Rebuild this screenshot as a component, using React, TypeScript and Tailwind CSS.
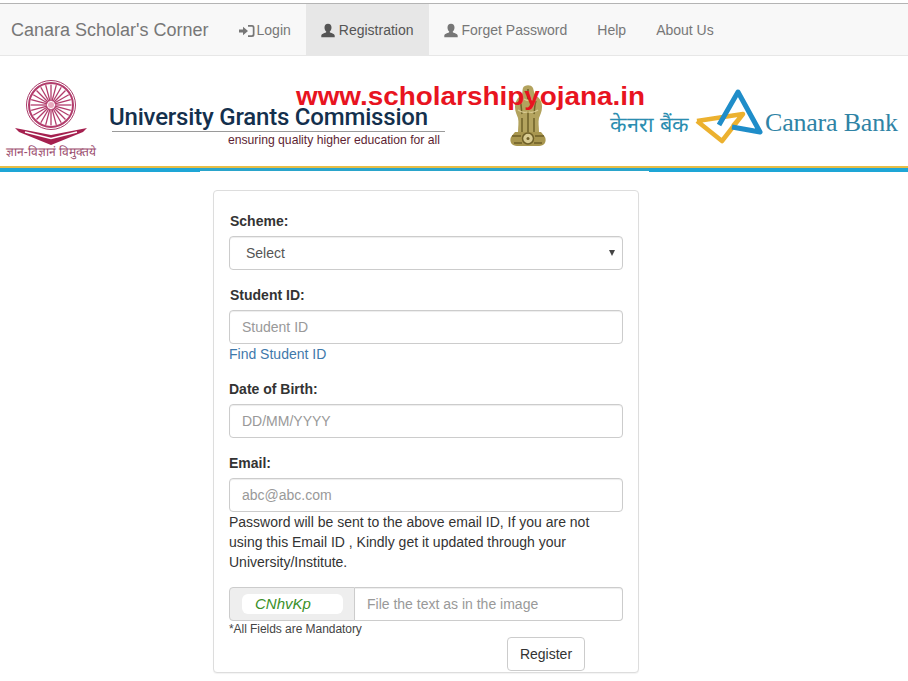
function UserIcon() {
  return (
    <svg width="14" height="15" viewBox="0 0 14 14" className="mr-[4px] fill-current">
      <path d="M7 0.200c2.300 0 3.500 1.600 3.500 3.800 0 1.600-.7 3.100-1.500 3.800-.3.300-.3 1 .1 1.200 1.500.8 4.600 1.300 4.600 3.300V13.800H.3v-1.500c0-2 3.100-2.500 4.600-3.300.4-.2.4-.9.1-1.200C4.200 7.100 3.500 5.600 3.500 4 3.500 1.800 4.700.2 7 .2z" />
    </svg>
  )
}

function LoginIcon() {
  return (
    <svg width="16" height="14" viewBox="0 0 16 14" className="mr-[2px] fill-current">
      <path d="M0 5.500h4V2.800L9 7l-5 4.200V8.500H0z" />
      <path d="M9 1h4a2.500 2.500 0 0 1 2.500 2.500v7A2.500 2.500 0 0 1 13 13H9v-1.700h3.600c.8 0 1.200-.4 1.200-1.200V3.900c0-.8-.4-1.200-1.200-1.200H9z" />
    </svg>
  )
}

function NavItem({ label, icon, active }: { label: string; icon?: React.ReactNode; active?: boolean }) {
  return (
    <a className={active ? "flex items-center px-[15px] pt-[2px] h-[51px] bg-[#e7e7e7] text-[#555] text-[14px]" : "flex items-center px-[15px] pt-[2px] h-[51px] text-[#777] text-[14px]"}>
      {icon}
      {label}
    </a>
  )
}

function UgcLogo() {
  const spokes = Array.from({ length: 24 }, (_, i) => (i * 15 * Math.PI) / 180)
  return (
    <div className="flex flex-col items-center w-[90px]">
      <svg width="74" height="66" viewBox="0 0 74 66">
        <circle cx="37" cy="25" r="24.500" fill="none" stroke="#a83a68" strokeWidth="1" />
        <circle cx="37" cy="25" r="22" fill="none" stroke="#b23c6c" strokeWidth="2" />
        {spokes.map((a, i) => (
          <line key={i} x1={37 + 4 * Math.cos(a)} y1={25 + 4 * Math.sin(a)} x2={37 + 20.500 * Math.cos(a)} y2={25 + 20.500 * Math.sin(a)} stroke="#b23c6c" strokeWidth="1.300" />
        ))}
        <circle cx="37" cy="25" r="3" fill="#e9a9bf" />
        <path d="M1 48 L37 55 L73 48 L69 52 L37 65 L5 52 Z" fill="#a5204f" />
        <path d="M11 52 L37 58.500 L63 52" fill="none" stroke="#fff" strokeWidth="1.500" />
      </svg>
      <span className="text-[12px] leading-[12px] text-[#9a4a6c] whitespace-nowrap">ज्ञान-विज्ञानं विमुक्तये</span>
    </div>
  )
}

function Emblem() {
  return (
    <svg width="40" height="64" viewBox="0 0 40 64">
      {/* lions, then the abacus under them */}
      <path d="M15 5c1-3 8-4 10 0 1 3 1 6 3 8 4 2 6 6 6 11 0 5-2 8-3 11-1 4 0 9 0 14H10c0-5 1-10 0-14-1-3-3-6-3-11 0-5 2-9 6-11 2-2 1-5 2-8z" fill="#b3a35e" />
      <path d="M12 18c2 4 1 9 2 13M28 18c-2 4-1 9-2 13M20 6v10M14 35v14M20 30v19M26 35v14" stroke="#6f6229" strokeWidth="1.500" fill="none" />
      <path d="M16 16c3 2 6 2 8 0M10 27c3 2 6 3 9 2M30 27c-3 2-6 3-9 2" stroke="#d9cd94" strokeWidth="1.300" fill="none" />
      <path d="M7 49h26l4 5c2 5-1 9-6 9H9c-5 0-8-4-6-9z" fill="#a8964f" />
      <circle cx="20" cy="55.500" r="5.500" fill="#d8cb92" stroke="#6e5f28" strokeWidth="1.500" />
      <circle cx="20" cy="55.500" r="1.500" fill="#6e5f28" />
      <path d="M4 53h9M27 53h9M6 60h8M26 60h8" stroke="#6e5f28" strokeWidth="1.300" />
    </svg>
  )
}

function CanaraLogo() {
  return (
    <svg width="70" height="58" viewBox="0 0 70 58">
      <path d="M3 33 L49 26 L39 38 M49 26 L28 53 L3 33" fill="none" stroke="#ecb12f" strokeWidth="4.500" strokeLinejoin="round" />
      <path d="M25 37 L44 4 L66 44 L38 39" fill="none" stroke="#1f8dc9" strokeWidth="5" strokeLinejoin="round" />
    </svg>
  )
}

function Banner() {
  return (
    <div className="relative flex h-[110px] bg-white">
      <div className="ml-[6px] mt-[24px]">
        <UgcLogo />
      </div>
      <div className="ml-[13px] mt-[47px] w-[336px]">
        <div className="text-[24px] leading-[28px] font-medium text-[#14304d] tracking-[-0.2px] whitespace-nowrap font-['Roboto',sans-serif]">University Grants Commission</div>
        <div className="ml-[3px] h-px bg-[#9a9a9a]"></div>
        <div className="pr-[5px] text-right text-[12.200px] leading-[16px] text-[#5e1f33]">ensuring quality higher education for all</div>
      </div>
      <div className="ml-[63px] mt-[27px]">
        <Emblem />
      </div>
      <div className="ml-[62px] mt-[54px] w-[80px] text-[21.500px] leading-[30px] text-[#2b8db0] whitespace-nowrap">केनरा बैंक</div>
      <div className="ml-[4px] mt-[32px]">
        <CanaraLogo />
      </div>
      <div className="ml-[1px] mt-[49px] text-[26px] leading-[36px] tracking-[-0.2px] text-[#2f83a5] whitespace-nowrap font-['Liberation_Serif',serif]">Canara Bank</div>
      <div className="absolute left-[296px] top-[26px] text-[25px] leading-[28px] font-bold text-[#e8141f] whitespace-nowrap scale-x-[1.115] origin-left">www.scholarshipyojana.in</div>
    </div>
  )
}

function Field({ label, placeholder, nudge }: { label: string; placeholder: string; nudge?: boolean }) {
  return (
    <>
      <label className={nudge ? "block ml-px mb-[5px] text-[14px] leading-[20px] font-bold text-[#333]" : "block mb-[5px] text-[14px] leading-[20px] font-bold text-[#333]"}>{label}</label>
      <input placeholder={placeholder} className="block w-full h-[34px] px-[12px] text-[14px] text-[#555] bg-white border border-[#ccc] rounded-[4px] shadow-[inset_0_1px_1px_rgba(0,0,0,0.075)] placeholder:text-[#999] outline-none" />
    </>
  )
}

function RegisterForm() {
  return (
    <div className="w-[426px] ml-[213px] mt-[18px] h-[483px] px-[15px] pt-[20px] bg-white border border-[#ddd] rounded-[4px] shadow-[0_1px_1px_rgba(0,0,0,0.05)]">
      <label className="block ml-px mb-[5px] text-[14px] leading-[20px] font-bold text-[#333]">Scheme:</label>
      <div className="relative">
        <select className="block w-full h-[34px] pl-[16px] text-[14px] text-[#555] bg-white border border-[#ccc] rounded-[4px] shadow-[inset_0_1px_1px_rgba(0,0,0,0.075)] appearance-none outline-none">
          <option>Select</option>
        </select>
        <span className="absolute right-[8px] top-[14px] w-0 h-0 border-x-[3px] border-x-transparent border-t-[6px] border-t-[#444]"></span>
      </div>

      <div className="mt-[15px]">
        <Field label="Student ID:" placeholder="Student ID" nudge />
      </div>
      <a className="block text-[14px] leading-[20px] text-[#3f79ab]">Find Student ID</a>

      <div className="mt-[15px]">
        <Field label="Date of Birth:" placeholder="DD/MM/YYYY" />
      </div>

      <div className="mt-[15px]">
        <Field label="Email:" placeholder="abc@abc.com" />
      </div>
      <p className="text-[14px] leading-[20px] text-[#333]">
        Password will be sent to the above email ID, If you are not using this Email ID , Kindly get it updated through your University/Institute.
      </p>

      <div className="flex mt-[15px] h-[34px]">
        <div className="flex items-center w-[126px] pl-[12px] bg-[#eee] border border-[#ccc] rounded-l-[4px]">
          <div className="w-[101px] h-[20px] pl-[13px] bg-white rounded-[6px] text-[15px] leading-[20px] italic text-[#3a9028]">CNhvKp</div>
        </div>
        <input placeholder="File the text as in the image" className="flex-1 min-w-0 px-[12px] text-[14px] text-[#555] bg-white border border-l-0 border-[#ccc] rounded-r-[4px] shadow-[inset_0_1px_1px_rgba(0,0,0,0.075)] placeholder:text-[#999] outline-none" />
      </div>
      <div className="text-[12px] leading-[16px] text-[#444] tracking-[-0.05px]">*All Fields are Mandatory</div>
      <div className="flex justify-end pr-[38px]">
        <button className="w-[78px] h-[34px] text-[14px] text-[#333] bg-white border border-[#ccc] rounded-[4px]">Register</button>
      </div>
    </div>
  )
}

export default function App() {
  return (
    <div className="min-h-[681px] bg-white pt-[3px] font-['Liberation_Sans',Arial,sans-serif]">
      <nav className="flex h-[53px] bg-[#f8f8f8] border-t border-t-[#b4b4b4] border-b border-b-[#e7e7e7]">
        <div className="flex items-center pl-[11px] pr-[15px] pt-[1px] text-[18px] text-[#777] whitespace-nowrap">Canara Scholar's Corner</div>
        <NavItem label="Login" icon={<LoginIcon />} />
        <NavItem label="Registration" icon={<UserIcon />} active />
        <NavItem label="Forget Password" icon={<UserIcon />} />
        <NavItem label="Help" />
        <NavItem label="About Us" />
      </nav>
      <Banner />
      <div className="h-[2px] bg-[#e6bd45]"></div>
      <div className="flex items-start">
        <div className="w-[200px] h-[4px] bg-[#1ea6d6]"></div>
        <div className="w-[449px] h-[3px] bg-[#2aa5cb]"></div>
        <div className="flex-1 h-[4px] bg-[#1ea6d6]"></div>
      </div>
      <RegisterForm />
    </div>
  )
}
